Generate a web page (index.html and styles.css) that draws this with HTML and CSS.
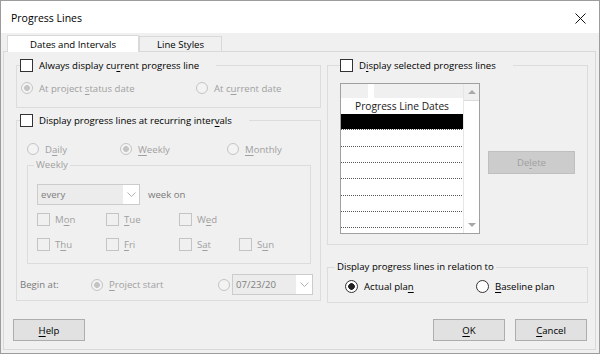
FILE: index.html
```html
<!DOCTYPE html>
<html lang="en">
<head>
  <meta charset="UTF-8" />
  <meta name="viewport" content="width=device-width, initial-scale=1.0"/>
  <title>Progress Lines</title>
  <link rel="stylesheet" href="styles.css">
</head>
<body>

  <div class="dialog">
    <div class="titlebar">
      <span class="title">Progress Lines</span>
      <svg class="close" width="11" height="11" viewBox="0 0 11 11">
        <path d="M0.5 0.5 L10.5 10.5 M10.5 0.5 L0.5 10.5" stroke="#111" stroke-width="1" fill="none"/>
      </svg>
    </div>

    <div class="body">
      <div class="tabs">
        <div class="tab active">Dates and Intervals</div>
        <div class="tab">Line Styles</div>
      </div>

      <div class="panel">
        <div class="columns">

          <!-- left column -->
          <div class="col col-left">
            <fieldset class="group g-current">
              <legend><span class="lg"><span class="check"></span><span>Always display cu<u>r</u>rent progress line</span></span></legend>
              <div class="opts opts-current">
                <span class="opt disabled w175"><span class="radio on"></span><span>At project <u>s</u>tatus date</span></span>
                <span class="opt disabled"><span class="radio"></span><span>At c<u>u</u>rrent date</span></span>
              </div>
            </fieldset>

            <fieldset class="group g-recurring">
              <legend><span class="lg"><span class="check"></span><span>Display progress lines at recurring inter<u>v</u>als</span></span></legend>
              <div class="opts opts-period">
                <span class="opt disabled w93"><span class="radio"></span><span>D<u>a</u>ily</span></span>
                <span class="opt disabled w107"><span class="radio on"></span><span><u>W</u>eekly</span></span>
                <span class="opt disabled"><span class="radio"></span><span><u>M</u>onthly</span></span>
              </div>

              <fieldset class="group g-weekly">
                <legend class="plain">Weekly</legend>
                <div class="every-row">
                  <div class="combo combo-every">
                    <span class="combo-text">every</span>
                    <span class="combo-arrow"><svg width="9" height="5" viewBox="0 0 9 5"><path d="M0.5 0.5 L4.5 4.5 L8.5 0.5" fill="none" stroke="#b0b0b0"/></svg></span>
                  </div>
                  <span class="muted week-on">week on</span>
                </div>
                <div class="days">
                  <span class="opt disabled w69"><span class="check"></span><span>M<u>o</u>n</span></span>
                  <span class="opt disabled w73"><span class="check"></span><span><u>T</u>ue</span></span>
                  <span class="opt disabled"><span class="check"></span><span>W<u>e</u>d</span></span>
                </div>
                <div class="days">
                  <span class="opt disabled w69"><span class="check"></span><span>T<u>h</u>u</span></span>
                  <span class="opt disabled w73"><span class="check"></span><span><u>F</u>ri</span></span>
                  <span class="opt disabled w60"><span class="check"></span><span>S<u>a</u>t</span></span>
                  <span class="opt disabled"><span class="check"></span><span>S<u>u</u>n</span></span>
                </div>
              </fieldset>

              <div class="begin-row">
                <span class="muted begin-label">Begin at:</span>
                <span class="opt disabled w127"><span class="radio on"></span><span><u>P</u>roject start</span></span>
                <span class="radio"></span>
                <div class="combo combo-date">
                  <span class="combo-text">07/23/20</span>
                  <span class="combo-arrow"><svg width="9" height="5" viewBox="0 0 9 5"><path d="M0.5 0.5 L4.5 4.5 L8.5 0.5" fill="none" stroke="#b0b0b0"/></svg></span>
                </div>
              </div>
            </fieldset>
          </div>

          <!-- right column -->
          <div class="col col-right">
            <fieldset class="group g-selected">
              <legend><span class="lg"><span class="check"></span><span>D<u>i</u>splay selected progress lines</span></span></legend>
              <div class="selected-body">
                <div class="listbox">
                  <div class="grid">
                    <div class="grid-top">
                      <span class="grid-corner"></span>
                      <span class="grid-notch"></span>
                      <span class="grid-head"></span>
                    </div>
                    <div class="grid-title">Progress Line Dates</div>
                    <div class="grid-row sel"></div>
                    <div class="grid-row tall"></div>
                    <div class="grid-row"></div>
                    <div class="grid-row"></div>
                    <div class="grid-row tall"></div>
                    <div class="grid-row"></div>
                    <div class="grid-row"></div>
                  </div>
                  <div class="scrollbar">
                    <span class="sb-btn sb-up"><span class="tri-up"></span></span>
                    <span class="sb-btn sb-down"><span class="tri-down"></span></span>
                  </div>
                </div>
                <button class="btn btn-delete" disabled>De<u>l</u>ete</button>
              </div>
            </fieldset>

            <fieldset class="group g-relation">
              <legend class="plain">Display progress lines in relation to</legend>
              <div class="opts opts-relation">
                <span class="opt w131"><span class="radio enabled on"></span><span>Actual pla<u>n</u></span></span>
                <span class="opt"><span class="radio enabled"></span><span><u>B</u>aseline plan</span></span>
              </div>
            </fieldset>
          </div>
        </div>

        <div class="buttons">
          <button class="btn"><u>H</u>elp</button>
          <span class="spacer"></span>
          <button class="btn"><u>O</u>K</button>
          <button class="btn"><u>C</u>ancel</button>
        </div>
      </div>
    </div>
  </div>

</body>
</html>
```

FILE: styles.css
```css
body {
  margin: 0;
  padding: 0;
  font-family: 'Open Sans', 'Noto Sans', sans-serif;
  font-size: 9.6px;
  color: #000;
  background: #ffffff;
}

u {
  text-decoration-thickness: 1px;
  text-underline-offset: 1.5px;
}

.dialog {
  width: 600px;
  height: 354px;
  box-sizing: border-box;
  border: 1px solid #9c9c9c;
  background: #f0f0f0;
  display: flex;
  flex-direction: column;
}

.titlebar {
  height: 32px;
  flex: none;
  background: #ffffff;
  display: flex;
  align-items: center;
  padding: 2px 13px 0 10px;
  box-sizing: border-box;
}

.title {
  flex: 1;
  font-size: 10.5px;
}

.body {
  padding: 2px 3px 3px 2px;
}

/* tabs */
.tabs {
  display: flex;
  align-items: flex-end;
  height: 16px;
  padding-left: 4px;
}

.tab {
  box-sizing: border-box;
  width: 83px;
  height: 15px;
  border: 1px solid #d9d9d9;
  border-bottom: none;
  display: flex;
  align-items: center;
  justify-content: center;
  padding-top: 1px;
}

.tab.active {
  width: 132px;
  height: 17px;
  background: #ffffff;
  margin-bottom: -1px;
  position: relative;
  z-index: 1;
}

.panel {
  height: 299px;
  box-sizing: border-box;
  border: 1px solid #d9d9d9;
  padding-top: 6px;
}

.columns {
  display: flex;
  gap: 6px;
  height: 246px;
  margin: 0 7px 0 12px;
}

.col {
  display: flex;
  flex-direction: column;
}

.col-left {
  width: 305px;
  gap: 5px;
}

.col-right {
  width: 261px;
  gap: 15px;
}

/* group boxes */
.group {
  margin: 0;
  padding: 0;
  min-width: 0;
  border: 1px solid #dcdcdc;
  box-sizing: border-box;
}

.group > legend {
  padding: 0 17px 0 0;
  margin-left: 3px;
  height: 14px;
}

.group > legend.plain {
  padding: 0 2px;
  line-height: 14px;
}

.lg {
  display: flex;
  align-items: center;
  height: 14px;
}

.g-current { height: 50px; }
.g-recurring { height: 188px; }
.g-selected { height: 187px; }
.g-relation { height: 43px; }

.g-selected > legend { margin-left: 12px; }
.g-relation > legend { margin-left: 7px; }

.g-weekly {
  height: 106px;
  width: 284px;
  margin: 2px 0 0 10px;
}

.g-weekly > legend {
  margin-left: 6px;
  color: #a0a0a0;
}

/* controls */
.check {
  display: inline-block;
  flex: none;
  width: 13px;
  height: 13px;
  box-sizing: border-box;
  border: 1px solid #333333;
  background: #ffffff;
  margin-right: 6px;
}

.disabled .check {
  border-color: #c4c4c4;
  background: #f0f0f0;
}

.radio {
  display: inline-block;
  flex: none;
  width: 12px;
  height: 12px;
  box-sizing: border-box;
  border: 1px solid #c4c4c4;
  border-radius: 50%;
  background: #f3f3f3;
}

.opt .radio {
  margin-right: 6px;
}

.radio.on {
  background: radial-gradient(circle, #c4c4c4 0 2.6px, #f3f3f3 3.2px);
}

.radio.enabled {
  width: 13px;
  height: 13px;
  border-color: #333333;
  background: #ffffff;
}

.radio.enabled.on {
  background: radial-gradient(circle, #222 0 3px, #fff 3.6px);
}

.opts {
  display: flex;
}

.opt {
  display: flex;
  align-items: center;
  height: 14px;
  flex: none;
}

.opt.disabled {
  color: #a0a0a0;
}

.w60 { width: 60px; }
.w69 { width: 69px; }
.w73 { width: 73px; }
.w93 { width: 93px; }
.w107 { width: 107px; }
.w127 { width: 127px; }
.w131 { width: 131px; }
.w175 { width: 175px; }

.opts-current { margin: 9px 0 0 4px; }
.opts-period { margin: 15px 0 0 10px; }
.opts-relation { margin: 5px 0 0 17px; }

.muted {
  color: #7a7a7a;
}

.every-row {
  display: flex;
  align-items: center;
  margin: 12px 0 0 9px;
}

.week-on {
  margin-left: 8px;
}

.days {
  display: flex;
  height: 13px;
  margin: 8px 0 0 9px;
}

.days + .days {
  margin-top: 12px;
}

.days .opt {
  height: 13px;
}

.days .check {
  margin-right: 5px;
}

.combo {
  display: flex;
  height: 21px;
  box-sizing: border-box;
  border: 1px solid #cccccc;
  background: #ececec;
}

.combo-every { width: 103px; }
.combo-date { width: 81px; margin-left: 2px; }

.combo-text {
  flex: 1;
  display: flex;
  align-items: center;
  padding-left: 3px;
  color: #808080;
}

.combo-arrow {
  width: 16px;
  background: #ffffff;
  display: flex;
  align-items: center;
  justify-content: center;
}

.begin-row {
  display: flex;
  align-items: center;
  height: 21px;
  margin: 10px 0 0 3px;
}

.begin-label {
  width: 71px;
}

/* list of progress line dates */
.selected-body {
  display: flex;
  align-items: flex-start;
}

.listbox {
  display: flex;
  flex: none;
  width: 140px;
  height: 151px;
  box-sizing: border-box;
  border: 1px solid #a0a0a0;
  background: #ffffff;
  margin: 11px 0 0 12px;
}

.grid {
  width: 122px;
  display: flex;
  flex-direction: column;
}

.grid-top {
  display: flex;
  height: 14px;
}

.grid-corner {
  width: 27px;
  background: #f0f0f0;
}

.grid-notch {
  width: 6px;
}

.grid-head {
  flex: 1;
  background: #f0f0f0;
}

.grid-title {
  height: 16px;
  line-height: 16px;
  text-align: center;
  font-size: 10.2px;
  color: #1a1a1a;
}

.grid-row {
  height: 16px;
  background:
    repeating-linear-gradient(90deg, #555 0 1px, transparent 1px 2px) bottom / 100% 1px no-repeat,
    #ffffff;
}

.grid-row.tall {
  height: 17px;
}

.grid-row.sel {
  background:
    repeating-linear-gradient(90deg, #555 0 1px, transparent 1px 2px) bottom / 100% 1px no-repeat,
    linear-gradient(#000, #000) top / 100% 15px no-repeat,
    #ffffff;
}

.scrollbar {
  width: 16px;
  display: flex;
  flex-direction: column;
  justify-content: space-between;
  border-left: 1px solid #e6e6e6;
  box-sizing: border-box;
}

.sb-btn {
  height: 16px;
  display: flex;
  align-items: center;
  justify-content: center;
}

.sb-up {
  background: #f0f0f0;
  border-bottom: 1px solid #dadada;
}

.tri-up {
  width: 0;
  height: 0;
  border-left: 4px solid transparent;
  border-right: 4px solid transparent;
  border-bottom: 4px solid #a8a8a8;
}

.tri-down {
  width: 0;
  height: 0;
  border-left: 4px solid transparent;
  border-right: 4px solid transparent;
  border-top: 4px solid #a8a8a8;
}

/* buttons */
.btn {
  width: 72px;
  height: 22px;
  box-sizing: border-box;
  padding: 0;
  border: 1px solid #adadad;
  background: #e1e1e1;
  font-family: inherit;
  font-size: inherit;
  color: #000;
}

.btn-delete {
  width: 87px;
  height: 23px;
  margin: 79px 0 0 8px;
  background: #cccccc;
  border-color: #bfbfbf;
  color: #a0a0a0;
}

.buttons {
  display: flex;
  gap: 10px;
  margin-top: 15px;
  padding: 0 8px 0 9px;
}

.spacer {
  flex: 1;
}
```
